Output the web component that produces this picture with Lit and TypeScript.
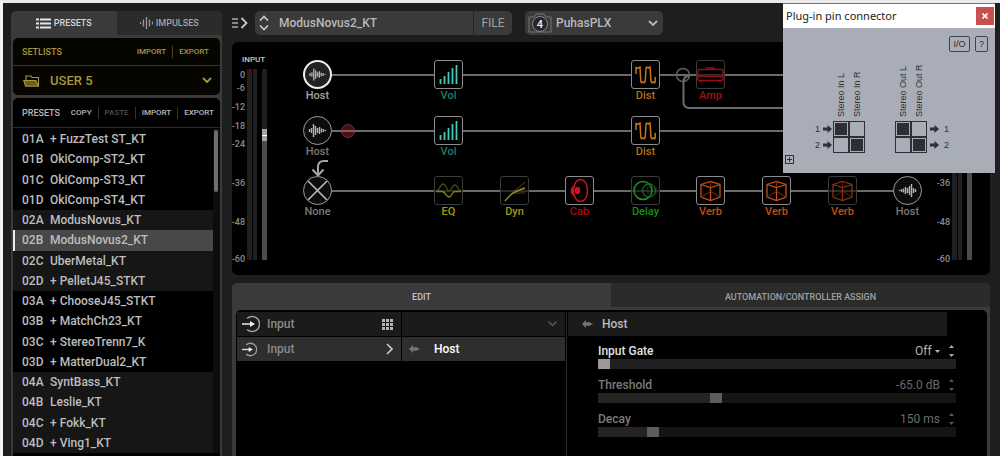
import { LitElement, html, css, svg, nothing } from "lit";
import { customElement, property, state } from "lit/decorators.js";

const PRESETS: [string, string][] = [
  ["01A", "+ FuzzTest ST_KT"],
  ["01B", "OkiComp-ST2_KT"],
  ["01C", "OkiComp-ST3_KT"],
  ["01D", "OkiComp-ST4_KT"],
  ["02A", "ModusNovus_KT"],
  ["02B", "ModusNovus2_KT"],
  ["02C", "UberMetal_KT"],
  ["02D", "+ PelletJ45_STKT"],
  ["03A", "+ ChooseJ45_STKT"],
  ["03B", "+ MatchCh23_KT"],
  ["03C", "+ StereoTrenn7_K"],
  ["03D", "+ MatterDual2_KT"],
  ["04A", "SyntBass_KT"],
  ["04B", "Leslie_KT"],
  ["04C", "+ Fokk_KT"],
  ["04D", "+ Ving1_KT"],
];

type Kind = "host" | "out" | "none" | "vol" | "dist" | "amp" | "eq" | "dyn" | "cab" | "delay" | "verb";
interface Block {
  kind: Kind;
  label: string;
  x: number;
  y: number;
  off?: boolean;
  lit?: boolean;
}

/* Block positions on the signal-flow canvas: x is the centre, y the top edge. */
const BLOCKS: Block[] = [
  { kind: "host", label: "Host", x: 45, y: 18, lit: true },
  { kind: "vol", label: "Vol", x: 176, y: 18 },
  { kind: "dist", label: "Dist", x: 373, y: 18 },
  { kind: "amp", label: "Amp", x: 438, y: 18, off: true },
  { kind: "host", label: "Host", x: 45, y: 74 },
  { kind: "vol", label: "Vol", x: 176, y: 74 },
  { kind: "dist", label: "Dist", x: 373, y: 74 },
  { kind: "none", label: "None", x: 45, y: 134 },
  { kind: "eq", label: "EQ", x: 176, y: 134, off: true },
  { kind: "dyn", label: "Dyn", x: 242, y: 134, off: true },
  { kind: "cab", label: "Cab", x: 307, y: 134 },
  { kind: "delay", label: "Delay", x: 373, y: 134, off: true },
  { kind: "verb", label: "Verb", x: 438, y: 134 },
  { kind: "verb", label: "Verb", x: 504, y: 134 },
  { kind: "verb", label: "Verb", x: 570, y: 134, off: true },
  { kind: "out", label: "Host", x: 635, y: 134 },
];

const wave = svg`<path d="M6.5 13v3M8.5 12v5M10.5 8v13M12.5 10v9M14.5 12v5M16.5 11v7M18.5 12.5v4M20.5 13v3M22.5 14v1" stroke="#b4b4b4" stroke-width="1.4" fill="none"/>`;

const GLYPHS: Record<Kind, unknown> = {
  host: wave,
  out: svg`<g transform="translate(29 0) scale(-1 1)">${wave}</g>`,
  none: svg`<path d="M4.5 4.5l20 20M24.5 4.5l-20 20" stroke="#bdbdbd" stroke-width="1.6"/>`,
  vol: svg`<path d="M6.5 24v-5M10.5 24v-8M14.5 24v-12M18.5 24v-16M22.5 24v-19" stroke="#45c9b7" stroke-width="1.8"/>`,
  dist: svg`<path d="M5 14V7.500l1.500.8L9 7l.8 14.500.8 1.300 1.400-.9 1.500.9.8-1.500L15 8.500 15.800 7l1.400 1L19 7l1 14.500.8 1.300 1.400-.9 1.500.9.500-1.500V17" fill="none" stroke="#c0751c" stroke-width="1.500"/>`,
  amp: svg`<g fill="none" stroke="#8d1114" stroke-width="1.4"><rect x="2" y="9.500" width="25" height="11" rx="1"/><path d="M2 16.500h25M9.500 9.500l1.500-1.500h7l1.500 1.500M5 21v1.500M24 21v1.500"/></g>`,
  eq: svg`<g fill="none" stroke-width="1.3"><path d="M2 15c4 0 4-7 7-7s4 7 6 7 3-6 6-6 3 6 6 6" stroke="#4d4513"/><path d="M2 15.500h6c4 0 4 5.500 7 5.500s3-5.500 6-5.500h6" stroke="#8f7f1c"/></g>`,
  dyn: svg`<g fill="none"><path d="M12 17L25 6" stroke="#4d4513"/><path d="M13 16h12v2H11z" fill="#242009"/><path d="M5 25c5-5 5-7 10-9 4-2 7-3 10-4" stroke="#9a8a20" stroke-width="1.5"/></g>`,
  cab: svg`<g stroke="#c9161c" fill="none" stroke-width="1.5"><ellipse cx="15.500" cy="14.500" rx="7" ry="11"/><path d="M8 11l-1.500 2v3.500L8 18.500z" fill="#c9161c"/><ellipse cx="12.500" cy="14.500" rx="2" ry="3" fill="#c9161c"/></g>`,
  delay: svg`<g fill="none" stroke="#1f9427"><circle cx="12" cy="14.500" r="9" stroke-width="1.500"/><circle cx="18" cy="14.500" r="6.500" stroke="#166b1c" stroke-width="1.300"/><circle cx="21" cy="14.500" r="5" stroke="#0f4013"/></g>`,
  verb: svg`<g fill="none" stroke="#cf4c14" stroke-width="1.300"><path d="M5 8.500L14.500 5.500 24 8.500v12.500l-9.500 3.500L5 21zM5 8.500l9.500 3L24 8.500M14.500 11.500v13"/><path d="M5 21l9.500-5.500L24 21M14.500 5.500v6" stroke="#7c2e0c" stroke-width="1"/></g>`,
};

const chevronDown = () => html`<svg viewBox="0 0 10 7" width="10" height="7" aria-hidden="true"><path d="M1 1l4 4 4-4" fill="none" stroke="currentColor" stroke-width="1.800"/></svg>`;

const SCALE: [number, number][] = [[0, 36], [-6, 49], [-12, 68], [-18, 87], [-24, 105], [-36, 144], [-48, 183], [-60, 220]];

@customElement("level-meter")
export class LevelMeter extends LitElement {
  @property() heading = "";
  @property({ type: Number }) fader = 0;
  /** Highest dB value that gets a printed mark. */
  @property({ type: Number }) top = 0;

  static styles = css`
    :host { display: block; }
    svg { display: block; }
    text { font-family: Roboto, sans-serif; font-size: 9px; fill: #8c8c8c; text-anchor: end; }
    .heading { fill: #c9c9c9; font-weight: 500; font-size: 8px; text-anchor: start; }
  `;

  render() {
    return html`<svg width="40" height="233" viewBox="0 0 40 233">
      ${this.heading ? svg`<text class="heading" x="10" y="20">${this.heading}</text>` : nothing}
      ${SCALE.filter(([v]) => v <= this.top).map(([v, y]) => svg`<text x="13" y=${y}>${v}</text>`)}
      <g fill="#1f1f1f"><rect x="15" y="27" width="5" height="191"/><rect x="21" y="27" width="4" height="191"/><rect x="30" y="27" width="5" height="191"/></g>
      <path d="M15 27h5v5h-5zM21 27h4v5h-4z" fill="#3a1715"/>
      <rect x="30" y=${this.fader} width="5" height=${218 - this.fader} fill="#4c4c4c"/>
      <rect x="30" y=${this.fader} width="5" height="12" fill="#a4a4a4"/>
      <rect x="30" y=${this.fader + 6} width="5" height="1" fill="#fff"/>
    </svg>`;
  }
}

@customElement("signal-flow")
export class SignalFlow extends LitElement {
  static styles = css`
    :host { display: block; position: relative; overflow: hidden; }
    .wires { position: absolute; left: 0; top: 0; }
    .block {
      position: absolute; width: 61px; padding: 0; border: 0; background: none;
      display: flex; flex-direction: column; align-items: center;
      font: 500 11px/14px Roboto, sans-serif; color: #777;
    }
    .tile { display: block; box-sizing: border-box; background: #000; border-radius: 3px; border: 1px solid #8c8c8c; }
    .round .tile { border-radius: 50%; background: #0c0c0c; border-color: #9a9a9a; }
    .lit .tile { background: #222; border: 2px solid #ececec; }
    .lit { color: #a3a3a3; }
    .off .tile { background: rgba(0, 0, 0, 0.6); border-color: #3c3c3c; }
    .faint { opacity: 0.65; }
    .vol { color: #207a6c; }
    .dist { color: #b86d14; }
    .amp { color: #a50f12; }
    .eq, .dyn { color: #a39a08; }
    .cab { color: #a60d15; }
    .delay { color: #0c9412; }
    .verb { color: #c64a10; }
  `;

  private classes(b: Block) {
    const round = ["host", "out", "none"].includes(b.kind);
    return ["block", b.kind, round && "round", b.lit && "lit", b.off && "off"].filter(Boolean).join(" ");
  }

  render() {
    return html`
      <svg class="wires" width="1400" height="233" fill="none" aria-hidden="true">
        <g stroke="#6b6b6b" stroke-width="2">
          <path d="M45 33H1400M45 89H1400M45 149H635"/>
          <circle cx="411" cy="33" r="6.500" stroke="#5e5e5e" stroke-width="1.500"/>
          <path d="M418 33.500c-5 0-6.500 3-6.500 7V60q0 6 6 6H1400"/>
        </g>
        <circle cx="76" cy="89" r="6.500" fill="#4a0d12" stroke="#5d3a3c"/>
        <path d="M69 89h14" stroke="#8a5355" stroke-width="2"/>
        <path d="M56 119h-4q-6 0-6 6v8M40.500 127.500l5.500 6 5.500-6" stroke="#a6a6a6" stroke-width="2"/>
      </svg>
      ${BLOCKS.map((b) => html`
        <button class=${this.classes(b)} style="left:${b.x - 30}px;top:${b.y}px">
          <svg class="tile" width="29" height="29" viewBox="1 1 27 27" aria-hidden="true"><g class=${b.kind === "verb" && b.off ? "faint" : ""}>${GLYPHS[b.kind]}</g></svg>
          <span>${b.label}</span>
        </button>`)}
    `;
  }
}

@customElement("pin-connector")
export class PinConnector extends LitElement {
  static styles = css`
    :host { display: flex; flex-direction: column; box-sizing: border-box; border-top: 1px solid #2f86c8; background: #a9adb7; font-family: "Liberation Sans", Arial, sans-serif; color: #2f2e35; }
    .title { display: flex; justify-content: space-between; align-items: center; height: 24px; padding: 0 1px 0 3px; background: #fff; color: #222; font: 11px/16px "Noto Sans", "Open Sans", sans-serif; }
    button { box-sizing: border-box; padding: 0; background: none; color: inherit; }
    .close { width: 18px; height: 18px; border: 0; background: #c75050; color: #fff; display: grid; place-items: center; }
    .tools { display: flex; justify-content: flex-end; gap: 5px; padding: 8px 7px 0; }
    .tools button { height: 16px; width: 13px; border: 1px solid #44434b; border-radius: 2px; font: 9px/12px "Liberation Sans", Arial, sans-serif; }
    .tools .wide { width: 21px; }
    .maps { display: flex; gap: 30px; padding-left: 32px; }
    .map { display: grid; grid-template-columns: 18px 16px 16px; grid-template-rows: 69px 16px 16px; font-size: 9px; line-height: 12px; }
    .map.out { grid-template-columns: 16px 16px 24px; }
    .head { writing-mode: vertical-rl; transform: rotate(180deg); font-size: 9px; line-height: 16px; padding-top: 4px; text-align: left; white-space: nowrap; }
    .pin { display: flex; align-items: center; gap: 3px; }
    .map.out .pin { gap: 5px; padding-left: 3px; }
    input { appearance: none; box-sizing: border-box; margin: 0; width: 16px; height: 16px; border: 1px solid #2f2e35; }
    input:checked { background: #2f2e35; box-shadow: inset 0 0 0 1px #a9adb7; }
    .add { width: 9px; height: 9px; margin: 2px 0 0 2px; border: 1px solid #2f2e35; display: grid; place-items: center; }
  `;

  private arrow = html`<svg width="9" height="8" viewBox="0 0 9 8" aria-hidden="true"><path d="M0 2.500h4.500V0L9 4 4.500 8V5.500H0z" fill="#2f2e35"/></svg>`;

  private box(row: number, name: string, on: boolean) {
    return html`<input type="checkbox" aria-label="${name} to pin ${row}" .checked=${on}>`;
  }

  render() {
    return html`
      <div class="title"><span>Plug-in pin connector</span>
        <button class="close" aria-label="Close"><svg width="6" height="6" viewBox="0 0 6 6"><path d="M.5.5l5 5M5.500.5l-5 5" stroke="#fff" stroke-width="1.600"/></svg></button>
      </div>
      <div class="tools"><button class="wide">I/O</button><button>?</button></div>
      <div class="maps">
        <div class="map">
          <span></span><span class="head">Stereo In L</span><span class="head">Stereo In R</span>
          ${[1, 2].map((n) => html`<span class="pin">${n}${this.arrow}</span>${this.box(n, "Stereo In L", n === 1)}${this.box(n, "Stereo In R", n === 2)}`)}
        </div>
        <div class="map out">
          <span class="head">Stereo Out L</span><span class="head">Stereo Out R</span><span></span>
          ${[1, 2].map((n) => html`${this.box(n, "Stereo Out L", n === 1)}${this.box(n, "Stereo Out R", n === 2)}<span class="pin">${this.arrow}${n}</span>`)}
        </div>
      </div>
      <button class="add" aria-label="Add pin"><svg width="5" height="5" viewBox="0 0 5 5"><path d="M2.500 0v5M0 2.500h5" stroke="#2f2e35"/></svg></button>
    `;
  }
}

@customElement("app-root")
export class AppRoot extends LitElement {
  @state() private selected = "02B";

  static styles = css`
    :host {
      display: grid; grid-template-columns: 211px minmax(0, 1fr); gap: 10px;
      box-sizing: border-box; height: 100vh; min-height: 456px; overflow: hidden; position: relative;
      padding: 8px 10px 0 8px; border-top: 3px solid #e9e9e9; border-left: 3px solid #f4f4f4;
      background: #1e1e1e; color: #b9b9b9; font: 500 12px/16px Roboto, sans-serif;
    }
    button, select { font: inherit; color: inherit; background: none; border: 0; padding: 0; margin: 0; border-radius: 0; text-align: left; }
    select { appearance: none; outline: 0; }
    svg { display: block; flex: none; }
    .caps { font-size: 9px; }

    .side { display: flex; flex-direction: column; min-height: 0; background: #3a3a3a; border-radius: 5px 5px 0 0; padding: 0 2px; }
    .side-tabs { display: grid; grid-template-columns: 1fr 1fr; height: 24px; margin: 0 -2px 3px; }
    .side-tabs button { display: flex; align-items: center; justify-content: center; gap: 3px; color: #d6d6d6; }
    .side-tabs .idle { background: #2b2b2b; color: #a5a5a5; border-radius: 0 5px 0 0; }
    .card { background: #000; border-radius: 5px; }
    .setlists { background: #060500; color: #a8973c; margin-bottom: 3px; }
    .bar { display: flex; align-items: center; height: 28px; padding: 0 6px 0 9px; box-sizing: border-box; }
    .setlists .bar { padding-right: 11px; border-bottom: 1px solid #333; }
    .bar .caps { flex: 1; }
    .act { font-size: 8px; padding: 0 6px; border-left: 1px solid #333; line-height: 12px; }
    .act.first { border-left: 0; }
    .act:last-child { padding-right: 0; }
    .setlists .act { border-color: #4a431c; }
    .act.dim { color: #4f4f4f; }
    .pick { display: flex; align-items: center; height: 29px; padding: 0 8px 0 10px; gap: 10px; }
    .pick select { flex: 1; font-size: 13px; }
    .presets { display: flex; flex-direction: column; flex: 1; min-height: 0; border-radius: 5px 5px 0 0; }
    .presets .bar { border-bottom: 1px solid #2a2a2a; height: 30px; flex: none; }
    .list { display: grid; grid-template-columns: minmax(0, 1fr) 7px; flex: 1; min-height: 0; padding: 1px 0 3px; }
    ul { list-style: none; margin: 0; padding: 0; display: grid; grid-auto-rows: minmax(20px, 1fr); }
    li { display: grid; }
    li.alt { background: #161616; }
    .row { display: grid; grid-template-columns: 28px 1fr; align-items: center; padding-left: 9px; color: #bdbdbd; white-space: nowrap; }
    .row.on { background: #484848; padding-left: 7px; border-left: 2px solid #eee; }
    .track { background: #0d0d0d; padding: 1px 2px 0 1px; }
    .thumb { height: 62px; border-radius: 2px; background: #6e6e6e; }

    .main { display: flex; flex-direction: column; min-width: 0; min-height: 0; }
    .top { display: flex; height: 24px; margin-bottom: 7px; align-items: center; }
    .name { display: flex; align-items: center; width: 257px; height: 24px; margin: 0 13px 0 7px; background: #3a3a3a; border-radius: 5px; }
    .steps { display: grid; gap: 4px; padding: 0 10px 0 4px; }
    .steps button { display: block; }
    .name .current { flex: 1; }
    .name .file { border-left: 1px solid #252525; width: 39px; height: 24px; text-align: center; color: #a0a0a0; font-weight: 400; }
    .snap { display: flex; align-items: center; width: 138px; height: 24px; background: #3a3a3a; border-radius: 5px; padding: 0 5px 0 3px; box-sizing: border-box; gap: 4px; }
    .snap select { flex: 1; min-width: 0; }
    .snap svg text { font: 500 11px Roboto, sans-serif; fill: #eee; text-anchor: middle; }

    .flow { display: grid; grid-template-columns: 40px minmax(0, 1fr) 53px; height: 233px; background: #000; border-radius: 6px; overflow: hidden; flex: none; }

    .edit { display: flex; flex-direction: column; flex: 1; margin-top: 8px; background: #3a3a3a; border-radius: 5px 5px 0 0; padding: 0 3px 0 4px; }
    .edit-tabs { display: grid; grid-template-columns: 1fr 1fr; height: 24px; margin: 0 -3px 3px -4px; }
    .edit-tabs button { text-align: center; color: #c4c4c4; padding-top: 3px; }
    .edit-tabs .idle { background: #2b2b2a; color: #a0a0a0; border-radius: 0 5px 0 0; }
    .body { display: grid; grid-template-columns: 164px 163px minmax(0, 1fr); column-gap: 1px; flex: 1; background: #000; border-radius: 5px 5px 0 0; padding: 2px 0 0 1px; color: #8a8a8a; }
    .col { display: flex; flex-direction: column; gap: 1px; }
    .cell { display: flex; align-items: center; height: 24px; background: #1b1b1b; padding: 0 8px 0 5px; gap: 7px; box-sizing: border-box; }
    .cell .grow { flex: 1; }
    .cell.sel { background: #2e2e2e; }
    .cell.sub { gap: 10px; }
    .cell.host { padding-left: 7px; gap: 14px; color: #fff; }
    .params { border-left: 1px solid #2a2a2a; padding-left: 1px; }
    .params .cell { margin-right: 40px; padding-left: 14px; gap: 9px; color: #bdbdbd; }
    form { display: grid; gap: 8px; padding: 7px 31px 0 30px; margin: 0; }
    .param { display: grid; grid-template-columns: 1fr auto 7px; column-gap: 9px; align-items: center; color: #7b7b7b; }
    .param.live { color: #e2e2e2; }
    .value { font-weight: 400; color: #6b6b6b; display: flex; align-items: center; gap: 3px; }
    .live .value { color: #b5b5b5; }
    .spin { display: flex; flex-direction: column; justify-content: space-between; height: 12px; color: #555; }
    .live .spin { color: #aaa; }
    .param input { grid-column: 1 / -1; appearance: none; width: 100%; height: 10px; margin: 0; background: #141414; }
    .live input { background: #202020; }
    .param input::-webkit-slider-thumb { appearance: none; width: 12px; height: 10px; background: #5c5c5c; }
    .live input::-webkit-slider-thumb { background: #999; }

    pin-connector { position: absolute; top: 0; right: 5px; width: 212px; height: 170px; }
  `;

  private inputIcon(size: number) {
    return html`<svg width=${size} height=${size} viewBox="0 0 18 18" fill="none" aria-hidden="true"><path d="M5 3.500a7.500 7.500 0 1 1 0 11" stroke="#9c9c9c" stroke-width="1.600"/><path d="M0 9h9" stroke="#ddd" stroke-width="1.600"/><path d="M8 6l5 3-5 3z" fill="#eee"/></svg>`;
  }

  private hostIcon() {
    return html`<svg width="11" height="8" viewBox="0 0 11 8" aria-hidden="true"><path d="M0 4l4-4v2.500l3-.5 4 2-4 2-3-.5V8z" fill="#747474"/></svg>`;
  }

  private tri(up: boolean) {
    return html`<svg width="5" height="3" viewBox="0 0 5 3" aria-hidden="true"><path d=${up ? "M0 3l2.500-3L5 3z" : "M0 0l2.500 3L5 0z"} fill="currentColor"/></svg>`;
  }

  private param(id: string, label: string, value: unknown, pos: number, live = false) {
    const fill = live ? "" : `background:linear-gradient(to right,#242424 ${pos / 10}%,#141414 ${pos / 10}%)`;
    return html`<div class="param ${live ? "live" : ""}">
      <label for=${id}>${label}</label>
      <span class="value">${value}</span>
      <span class="spin"><button type="button" aria-label="${label} up">${this.tri(true)}</button><button type="button" aria-label="${label} down">${this.tri(false)}</button></span>
      <input id=${id} type="range" min="0" max="1000" .value=${String(pos)} style=${fill}>
    </div>`;
  }

  render() {
    return html`
      <aside class="side">
        <nav class="side-tabs">
          <button class="caps"><svg width="15" height="11" viewBox="0 0 15 11"><path d="M0 1.500h3M0 5.500h3M0 9.500h3M4 1.500h11M4 5.500h11M4 9.500h11" stroke="#e6e6e6" stroke-width="2"/></svg>PRESETS</button>
          <button class="caps idle"><svg width="13" height="12" viewBox="0 0 13 12"><path d="M.5 5v2M3.500 2.500v7M6.500 0v12M9.500 2.500v7M12.500 4.500v3" stroke="#9b9b9b" stroke-width="1.300"/></svg>IMPULSES</button>
        </nav>
        <section class="card setlists">
          <div class="bar"><span class="caps">SETLISTS</span><button class="act first">IMPORT</button><button class="act">EXPORT</button></div>
          <label class="pick">
            <svg width="17" height="12" viewBox="0 0 17 12" fill="none"><path d="M3 5V1h5l1 1.500h6.500V11" stroke="#a8973c" stroke-width="1.100"/><path d="M.8 5.500h12.200l2.200 5.700H2.500z" fill="#6b5f25" stroke="#a8973c" stroke-width="1.100"/></svg>
            <select aria-label="Setlist"><option>USER 5</option></select>${chevronDown()}
          </label>
        </section>
        <section class="card presets">
          <div class="bar"><span class="caps">PRESETS</span><button class="act first">COPY</button><button class="act dim">PASTE</button><button class="act">IMPORT</button><button class="act">EXPORT</button></div>
          <div class="list">
            <ul>${PRESETS.map(([code, name], i) => html`<li class=${Math.floor(i / 4) % 2 ? "alt" : ""}>
              <button class="row ${code === this.selected ? "on" : ""}" @click=${() => (this.selected = code)}><span>${code}</span><span>${name}</span></button></li>`)}</ul>
            <div class="track"><div class="thumb"></div></div>
          </div>
        </section>
      </aside>

      <main class="main">
        <header class="top">
          <button aria-label="Toggle browser"><svg width="16" height="12" viewBox="0 0 16 12" fill="none"><path d="M0 2h6M0 6h6M0 10h6" stroke="#aaa" stroke-width="1.300"/><path d="M9.500 1l5 5-5 5" stroke="#c8c8c8" stroke-width="1.800"/></svg></button>
          <div class="name">
            <span class="steps">
              <button aria-label="Previous preset"><svg width="10" height="6" viewBox="0 0 10 6"><path d="M1 5.500l4-4 4 4" fill="none" stroke="#c8c8c8" stroke-width="1.700"/></svg></button>
              <button aria-label="Next preset"><svg width="10" height="6" viewBox="0 0 10 6"><path d="M1 .5l4 4 4-4" fill="none" stroke="#c8c8c8" stroke-width="1.700"/></svg></button>
            </span>
            <span class="current">ModusNovus2_KT</span>
            <button class="file">FILE</button>
          </div>
          <label class="snap">
            <svg width="24" height="20" viewBox="0 0 24 20" fill="none"><path d="M1 4h5l2-3h8l2 3h5v15H1z" stroke="#777"/><circle cx="12" cy="11" r="7.500" fill="#262626" stroke="#888"/><text x="12" y="15">4</text></svg>
            <select aria-label="Snapshot"><option>PuhasPLX</option></select>${chevronDown()}
          </label>
        </header>

        <section class="flow">
          <level-meter heading="INPUT" .fader=${87}></level-meter>
          <signal-flow></signal-flow>
          <level-meter .fader=${60} .top=${-36}></level-meter>
        </section>

        <section class="edit">
          <nav class="edit-tabs"><button class="caps">EDIT</button><button class="caps idle">AUTOMATION/CONTROLLER ASSIGN</button></nav>
          <div class="body">
            <div class="col">
              <button class="cell">${this.inputIcon(18)}<span class="grow">Input</span>
                <svg width="11" height="11" viewBox="0 0 11 11"><path d="M0 1.500h11M0 5.500h11M0 9.500h11" stroke="#b4b4b4" stroke-width="3" stroke-dasharray="3 1"/></svg></button>
              <button class="cell sel sub">${this.inputIcon(15)}<span class="grow">Input</span>
                <svg width="7" height="12" viewBox="0 0 7 12"><path d="M1 1l5 5-5 5" fill="none" stroke="#c4c4c4" stroke-width="1.700"/></svg></button>
            </div>
            <div class="col">
              <button class="cell" aria-label="Choose model"><span class="grow"></span><svg width="9" height="6" viewBox="0 0 9 6"><path d="M.5.5l4 4 4-4" fill="none" stroke="#5a5a5a" stroke-width="1.400"/></svg></button>
              <button class="cell sel host">${this.hostIcon()}<span>Host</span></button>
            </div>
            <div class="params">
              <div class="cell">${this.hostIcon()}<span>Host</span></div>
              <form>
                ${this.param("gate", "Input Gate", html`<select aria-label="Input gate state"><option>Off</option></select>${this.tri(false)}`, 0, true)}
                ${this.param("threshold", "Threshold", "-65.0 dB", 323)}
                ${this.param("decay", "Decay", "150 ms", 141)}
              </form>
            </div>
          </div>
        </section>
      </main>

      <pin-connector></pin-connector>
    `;
  }
}
